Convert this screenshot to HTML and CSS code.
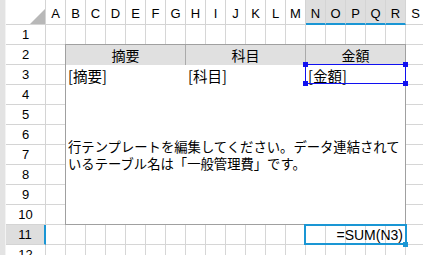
FILE: index.html
```html
<!DOCTYPE html>
<html lang="ja">
<head>
<meta charset="utf-8">
<link rel="stylesheet" href="styles.css">
</head>
<body>
<div class="sheet">
  <div class="strip"></div>
  <div class="corner"></div>
  <div class="gridbg"></div>
  <div class="ch">A</div><div class="ch">B</div><div class="ch">C</div><div class="ch">D</div><div class="ch">E</div><div class="ch">F</div><div class="ch">G</div><div class="ch">H</div><div class="ch">I</div><div class="ch">J</div><div class="ch">K</div><div class="ch">L</div><div class="ch">M</div><div class="ch sel">N</div><div class="ch sel">O</div><div class="ch sel">P</div><div class="ch sel">Q</div><div class="ch sel">R</div><div class="ch">S</div>
  <div class="rh">1</div><div class="rh">2</div><div class="rh">3</div><div class="rh">4</div><div class="rh">5</div><div class="rh">6</div><div class="rh">7</div><div class="rh">8</div><div class="rh">9</div><div class="rh">10</div><div class="rh sel">11</div><div class="rh">12</div>
  <div class="tpl">
    <div class="th">摘要</div>
    <div class="th">科目</div>
    <div class="th last">金額</div>
    <div class="td">[摘要]</div>
    <div class="td">[科目]</div>
    <div class="td cur">[金額]<div class="selbox"><span class="hd tl"></span><span class="hd tr"></span><span class="hd bl"></span><span class="hd br"></span></div></div>
    <div class="txt"><p>行テンプレートを編集してください。データ連結されて<br>いるテーブル名は「一般管理費」です。</p></div>
  </div>
  <div class="sum">=SUM(N3)<span class="fill"></span></div>
</div>
</body>
</html>
```
FILE: styles.css
```css
html, body {
  margin: 0;
  padding: 0;
  width: 423px;
  height: 255px;
  overflow: hidden;
  background: #fff;
}
* { box-sizing: border-box; }
.sheet {
  display: grid;
  grid-template-columns: 6px 40px repeat(19, 20px);
  grid-template-rows: 25px repeat(12, 20px);
  font-family: "Liberation Sans", Arial, sans-serif;
  color: #000;
}
.strip {
  grid-column: 1;
  grid-row: 1 / -1;
  background: #e3e3e3;
  border-right: 1px solid #f3f3f3;
}
.corner {
  grid-column: 2;
  grid-row: 1;
  position: relative;
  border-right: 1px solid #d4d4d4;
  border-bottom: 1px solid #d4d4d4;
}
.corner::after {
  content: "";
  position: absolute;
  right: 0;
  bottom: 0;
  width: 15px;
  height: 15px;
  background: #b8b8b8;
  clip-path: polygon(100% 0, 100% 100%, 0 100%);
}
.gridbg {
  grid-column: 3 / -1;
  grid-row: 2 / -1;
  background-image:
    linear-gradient(to right, transparent 19px, #d6d6d6 19px),
    linear-gradient(to bottom, transparent 19px, #d6d6d6 19px);
  background-size: 20px 20px;
}
.ch {
  display: flex;
  justify-content: center;
  align-items: center;
  padding-top: 3px;
  font-size: 13px;
  border-right: 1px solid #d4d4d4;
  border-bottom: 1px solid #d4d4d4;
}
.ch.sel {
  background: #dedede;
  border-bottom: 2px solid #1a96d4;
  padding-top: 4px;
}
.rh {
  grid-column: 2;
  display: flex;
  justify-content: center;
  align-items: center;
  font-size: 13px;
  border-right: 1px solid #d4d4d4;
  border-bottom: 1px solid #d4d4d4;
}
.rh.sel {
  background: #dedede;
  border-right: 2px solid #1a96d4;
}
.tpl {
  grid-column: 4 / 21;
  grid-row: 3 / 12;
  margin: -1px 0 0 -1px;
  border: 1px solid #a0a0a0;
  background: #fff;
  display: grid;
  grid-template-columns: 120px 120px 99px;
  grid-template-rows: 20px 20px 1fr;
  font-family: "Noto Sans CJK JP", "Liberation Sans", sans-serif;
}
.th {
  background: #e0e0e0;
  border-right: 1px solid #aaaaaa;
  display: flex;
  justify-content: center;
  align-items: center;
  font-size: 14px;
}
.th.last { border-right: 0; }
.td {
  display: flex;
  align-items: center;
  padding-left: 2px;
  font-size: 14.5px;
}
.td.cur { position: relative; }
.selbox {
  position: absolute;
  left: -1px;
  top: -1px;
  width: 101px;
  height: 20px;
  border: 1px solid #1010f0;
}
.hd {
  position: absolute;
  width: 5px;
  height: 5px;
  background: #1010f0;
}
.hd.tl { left: -3px; top: -3px; }
.hd.tr { right: -3px; top: -3px; }
.hd.bl { left: -3px; bottom: -3px; }
.hd.br { right: -3px; bottom: -3px; }
.txt {
  grid-column: 1 / -1;
  display: flex;
  align-items: center;
  padding-left: 2px;
  font-size: 13.33px;
  line-height: 17px;
}
.txt p { margin: 0; }
.sum {
  grid-column: 16 / 21;
  grid-row: 12;
  margin: -1px -1px 0 -2px;
  border: 2px solid #1a96d4;
  position: relative;
  display: flex;
  align-items: center;
  justify-content: flex-end;
  padding-right: 2px;
  font-size: 14px;
}
.fill {
  position: absolute;
  right: -3px;
  bottom: -4px;
  width: 5px;
  height: 5px;
  background: #1a96d4;
}
```
